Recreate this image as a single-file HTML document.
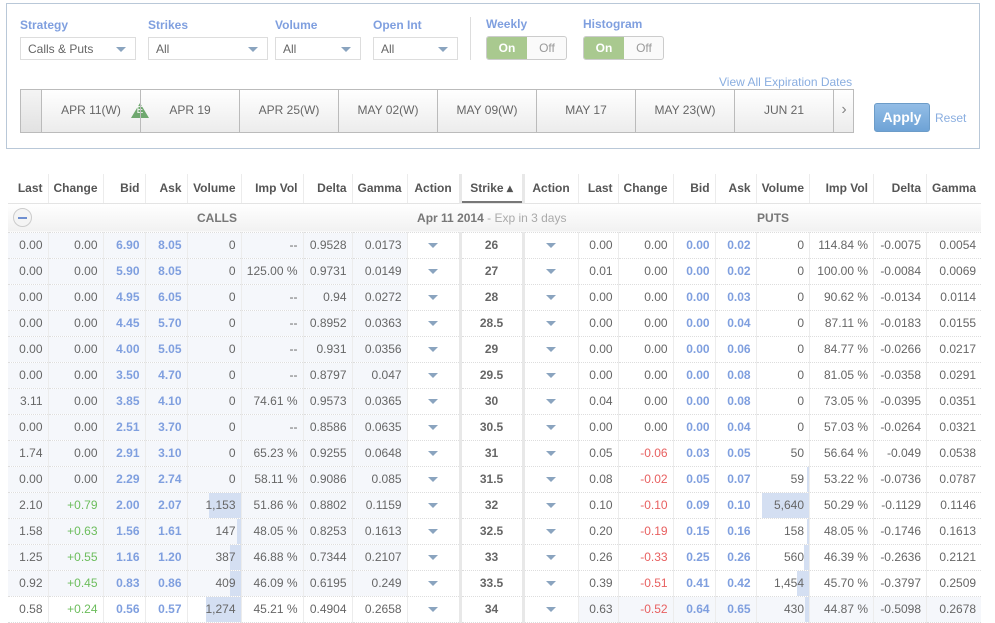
<!DOCTYPE html><html><head><style>
*{box-sizing:border-box;margin:0;padding:0}
body{width:995px;height:623px;overflow:hidden;background:#fff;font-family:"Liberation Sans",Arial,sans-serif;font-size:12px;color:#666;position:relative}
.panel{position:absolute;left:6px;top:3px;width:974px;height:146px;border:1px solid #b9c8d8}
.lbl{position:absolute;top:14px;color:#7f9fdf;font-weight:bold;font-size:12px}
.sel{position:absolute;top:33px;height:23px;border:1px solid #ddd;padding:4px 7px;color:#666}
.sel:after{content:"";position:absolute;right:9px;top:9px;border-left:5px solid transparent;border-right:5px solid transparent;border-top:5px solid #8aa4bf}
.tog{position:absolute;top:32px;width:81px;height:24px;border:1px solid #ccc;border-radius:3px;overflow:hidden;background:#fafafa}
.tog span{position:absolute;top:0;height:22px;line-height:22px;width:40px;text-align:center}
.tog .on{left:0;background:#a9c98f;color:#fff;font-weight:bold}
.tog .off{left:40px;color:#999}
.tabs{position:absolute;left:13px;top:85px;height:44px;width:834px;border:1px solid #bbb;background:linear-gradient(#fff,#ececec)}
.tab{position:absolute;top:0;height:42px;line-height:40px;width:99px;border-left:1px solid #bbb;text-align:center;color:#666;font-size:12px}
table{position:absolute;left:8px;top:174px;border-collapse:collapse;table-layout:fixed}
td,th{height:26px;padding:0 5px;text-align:right;border-left:1px solid #ececec;border-bottom:1px dotted #ddd;white-space:nowrap;position:relative}
th{height:29px;font-weight:bold;color:#555;border-bottom:1px solid #e4e4e4}
tr.g td{height:29px;background:linear-gradient(#fff,#f1f1f1);font-weight:bold;color:#777;border-left:none}
.b{color:#7f9fdf;font-weight:bold}.gr{color:#6cbd5c}.rd{color:#e86060}
.s{background:#f5f7fb}
td.k{text-align:center;font-weight:bold;color:#666;border-left:3px solid #e8e8e8;border-right:3px solid #e8e8e8}
th.k{border-left:3px solid #e8e8e8;border-right:3px solid #e8e8e8;text-align:center}
td.a{text-align:center}
.ar{display:inline-block;border-left:5px solid transparent;border-right:5px solid transparent;border-top:5px solid #8aa4bf;vertical-align:middle}
.h{position:absolute;right:0;top:0;bottom:0;background:#d4dff2;z-index:0}
.v{position:relative;z-index:1}
</style></head><body>
<div class="panel">
<div class="lbl" style="left:13px">Strategy</div>
<div class="sel" style="left:13px;width:116px">Calls &amp; Puts</div>
<div class="lbl" style="left:141px">Strikes</div>
<div class="sel" style="left:141px;width:120px">All</div>
<div class="lbl" style="left:268px">Volume</div>
<div class="sel" style="left:268px;width:86px">All</div>
<div class="lbl" style="left:366px">Open Int</div>
<div class="sel" style="left:366px;width:85px">All</div>
<div style="position:absolute;left:463px;top:13px;width:1px;height:43px;background:#ddd"></div>
<div class="lbl" style="left:479px;top:13px">Weekly</div>
<div class="tog" style="left:479px"><span class="on">On</span><span class="off">Off</span></div>
<div class="lbl" style="left:576px;top:13px">Histogram</div>
<div class="tog" style="left:576px"><span class="on">On</span><span class="off">Off</span></div>
<div style="position:absolute;left:712px;top:71px;color:#8aaee0">View All Expiration Dates</div>
<div class="tabs">
<div style="position:absolute;left:0;top:0;width:20px;height:42px;background:linear-gradient(#f4f4f4,#e2e2e2)"></div>
<div class="tab" style="left:20px">APR 11(W)</div>
<div style="position:absolute;left:110px;top:13px;width:0;height:0;border-left:9px solid transparent;border-right:9px solid transparent;border-bottom:15px solid #6fa86f"></div>
<div style="position:absolute;left:110px;top:15px;width:18px;text-align:center;color:#fff;font-size:10px">E</div>
<div class="tab" style="left:119px">APR 19</div>
<div class="tab" style="left:218px">APR 25(W)</div>
<div class="tab" style="left:317px">MAY 02(W)</div>
<div class="tab" style="left:416px">MAY 09(W)</div>
<div class="tab" style="left:515px">MAY 17</div>
<div class="tab" style="left:614px">MAY 23(W)</div>
<div class="tab" style="left:713px">JUN 21</div>
<div class="tab" style="left:812px;width:21px;color:#888;font-size:16px">&#8250;</div>
</div>
<div style="position:absolute;left:867px;top:99px;width:56px;height:29px;border:1px solid #6c9cc8;border-radius:3px;background:linear-gradient(#93bde6,#6ea3d6);color:#fff;font-weight:bold;font-size:14px;text-align:center;line-height:27px">Apply</div>
<div style="position:absolute;left:928px;top:107px;color:#8aaee0">Reset</div>
</div>
<table>
<colgroup><col style="width:40px"><col style="width:54px"><col style="width:42px"><col style="width:42px"><col style="width:54px"><col style="width:62px"><col style="width:49px"><col style="width:55px"><col style="width:53px"><col style="width:63px"><col style="width:55px"><col style="width:40px"><col style="width:55px"><col style="width:42px"><col style="width:41px"><col style="width:52px"><col style="width:64px"><col style="width:53px"><col style="width:54px"></colgroup>
<tr><th style="border-left:none">Last</th><th>Change</th><th>Bid</th><th>Ask</th><th>Volume</th><th>Imp Vol</th><th>Delta</th><th>Gamma</th><th style="text-align:center">Action</th><th class="k" style="box-shadow:inset 0 -2px #777">Strike &#9652;</th><th style="text-align:center">Action</th><th>Last</th><th>Change</th><th>Bid</th><th>Ask</th><th>Volume</th><th>Imp Vol</th><th>Delta</th><th>Gamma</th></tr>
<tr class="g"><td style="text-align:left"><span style="display:inline-block;width:19px;height:19px;border:1px solid #ccc;border-radius:50%;background:#f4f4f4;vertical-align:middle;position:relative"><span style="position:absolute;left:4px;top:8px;width:9px;height:2px;background:#6f8fd0"></span></span></td><td></td><td></td><td></td><td colspan="4" style="text-align:left;padding-left:10px">CALLS</td><td colspan="3" style="text-align:left;padding-left:10px;border-left:none">Apr 11 2014 <span style="color:#aaa;font-weight:normal">- Exp in 3 days</span></td><td colspan="8" style="text-align:left;padding-left:179px">PUTS</td></tr>
<tr><td class="s" style="border-left:none">0.00</td><td class="s">0.00</td><td class="s b">6.90</td><td class="s b">8.05</td><td class="s">0</td><td class="s">--</td><td class="s">0.9528</td><td class="s">0.0173</td><td class="a"><i class="ar"></i></td><td class="k">26</td><td class="a"><i class="ar"></i></td><td>0.00</td><td>0.00</td><td class="b">0.00</td><td class="b">0.02</td><td>0</td><td>114.84 %</td><td>-0.0075</td><td>0.0054</td></tr>
<tr><td class="s" style="border-left:none">0.00</td><td class="s">0.00</td><td class="s b">5.90</td><td class="s b">8.05</td><td class="s">0</td><td class="s">125.00 %</td><td class="s">0.9731</td><td class="s">0.0149</td><td class="a"><i class="ar"></i></td><td class="k">27</td><td class="a"><i class="ar"></i></td><td>0.01</td><td>0.00</td><td class="b">0.00</td><td class="b">0.02</td><td>0</td><td>100.00 %</td><td>-0.0084</td><td>0.0069</td></tr>
<tr><td class="s" style="border-left:none">0.00</td><td class="s">0.00</td><td class="s b">4.95</td><td class="s b">6.05</td><td class="s">0</td><td class="s">--</td><td class="s">0.94</td><td class="s">0.0272</td><td class="a"><i class="ar"></i></td><td class="k">28</td><td class="a"><i class="ar"></i></td><td>0.00</td><td>0.00</td><td class="b">0.00</td><td class="b">0.03</td><td>0</td><td>90.62 %</td><td>-0.0134</td><td>0.0114</td></tr>
<tr><td class="s" style="border-left:none">0.00</td><td class="s">0.00</td><td class="s b">4.45</td><td class="s b">5.70</td><td class="s">0</td><td class="s">--</td><td class="s">0.8952</td><td class="s">0.0363</td><td class="a"><i class="ar"></i></td><td class="k">28.5</td><td class="a"><i class="ar"></i></td><td>0.00</td><td>0.00</td><td class="b">0.00</td><td class="b">0.04</td><td>0</td><td>87.11 %</td><td>-0.0183</td><td>0.0155</td></tr>
<tr><td class="s" style="border-left:none">0.00</td><td class="s">0.00</td><td class="s b">4.00</td><td class="s b">5.05</td><td class="s">0</td><td class="s">--</td><td class="s">0.931</td><td class="s">0.0356</td><td class="a"><i class="ar"></i></td><td class="k">29</td><td class="a"><i class="ar"></i></td><td>0.00</td><td>0.00</td><td class="b">0.00</td><td class="b">0.06</td><td>0</td><td>84.77 %</td><td>-0.0266</td><td>0.0217</td></tr>
<tr><td class="s" style="border-left:none">0.00</td><td class="s">0.00</td><td class="s b">3.50</td><td class="s b">4.70</td><td class="s">0</td><td class="s">--</td><td class="s">0.8797</td><td class="s">0.047</td><td class="a"><i class="ar"></i></td><td class="k">29.5</td><td class="a"><i class="ar"></i></td><td>0.00</td><td>0.00</td><td class="b">0.00</td><td class="b">0.08</td><td>0</td><td>81.05 %</td><td>-0.0358</td><td>0.0291</td></tr>
<tr><td class="s" style="border-left:none">3.11</td><td class="s">0.00</td><td class="s b">3.85</td><td class="s b">4.10</td><td class="s">0</td><td class="s">74.61 %</td><td class="s">0.9573</td><td class="s">0.0365</td><td class="a"><i class="ar"></i></td><td class="k">30</td><td class="a"><i class="ar"></i></td><td>0.04</td><td>0.00</td><td class="b">0.00</td><td class="b">0.08</td><td>0</td><td>73.05 %</td><td>-0.0395</td><td>0.0351</td></tr>
<tr><td class="s" style="border-left:none">0.00</td><td class="s">0.00</td><td class="s b">2.51</td><td class="s b">3.70</td><td class="s">0</td><td class="s">--</td><td class="s">0.8586</td><td class="s">0.0635</td><td class="a"><i class="ar"></i></td><td class="k">30.5</td><td class="a"><i class="ar"></i></td><td>0.00</td><td>0.00</td><td class="b">0.00</td><td class="b">0.04</td><td>0</td><td>57.03 %</td><td>-0.0264</td><td>0.0321</td></tr>
<tr><td class="s" style="border-left:none">1.74</td><td class="s">0.00</td><td class="s b">2.91</td><td class="s b">3.10</td><td class="s">0</td><td class="s">65.23 %</td><td class="s">0.9255</td><td class="s">0.0648</td><td class="a"><i class="ar"></i></td><td class="k">31</td><td class="a"><i class="ar"></i></td><td>0.05</td><td class="rd">-0.06</td><td class="b">0.03</td><td class="b">0.05</td><td>50</td><td>56.64 %</td><td>-0.049</td><td>0.0538</td></tr>
<tr><td class="s" style="border-left:none">0.00</td><td class="s">0.00</td><td class="s b">2.29</td><td class="s b">2.74</td><td class="s">0</td><td class="s">58.11 %</td><td class="s">0.9086</td><td class="s">0.085</td><td class="a"><i class="ar"></i></td><td class="k">31.5</td><td class="a"><i class="ar"></i></td><td>0.08</td><td class="rd">-0.02</td><td class="b">0.05</td><td class="b">0.07</td><td><span class="h" style="width:2px"></span><span class="v">59</span></td><td>53.22 %</td><td>-0.0736</td><td>0.0787</td></tr>
<tr><td class="s" style="border-left:none">2.10</td><td class="s gr">+0.79</td><td class="s b">2.00</td><td class="s b">2.07</td><td class="s"><span class="h" style="width:32px"></span><span class="v">1,153</span></td><td class="s">51.86 %</td><td class="s">0.8802</td><td class="s">0.1159</td><td class="a"><i class="ar"></i></td><td class="k">32</td><td class="a"><i class="ar"></i></td><td>0.10</td><td class="rd">-0.10</td><td class="b">0.09</td><td class="b">0.10</td><td><span class="h" style="width:47px"></span><span class="v">5,640</span></td><td>50.29 %</td><td>-0.1129</td><td>0.1146</td></tr>
<tr><td class="s" style="border-left:none">1.58</td><td class="s gr">+0.63</td><td class="s b">1.56</td><td class="s b">1.61</td><td class="s"><span class="h" style="width:4px"></span><span class="v">147</span></td><td class="s">48.05 %</td><td class="s">0.8253</td><td class="s">0.1613</td><td class="a"><i class="ar"></i></td><td class="k">32.5</td><td class="a"><i class="ar"></i></td><td>0.20</td><td class="rd">-0.19</td><td class="b">0.15</td><td class="b">0.16</td><td><span class="h" style="width:2px"></span><span class="v">158</span></td><td>48.05 %</td><td>-0.1746</td><td>0.1613</td></tr>
<tr><td class="s" style="border-left:none">1.25</td><td class="s gr">+0.55</td><td class="s b">1.16</td><td class="s b">1.20</td><td class="s"><span class="h" style="width:11px"></span><span class="v">387</span></td><td class="s">46.88 %</td><td class="s">0.7344</td><td class="s">0.2107</td><td class="a"><i class="ar"></i></td><td class="k">33</td><td class="a"><i class="ar"></i></td><td>0.26</td><td class="rd">-0.33</td><td class="b">0.25</td><td class="b">0.26</td><td><span class="h" style="width:5px"></span><span class="v">560</span></td><td>46.39 %</td><td>-0.2636</td><td>0.2121</td></tr>
<tr><td class="s" style="border-left:none">0.92</td><td class="s gr">+0.45</td><td class="s b">0.83</td><td class="s b">0.86</td><td class="s"><span class="h" style="width:11px"></span><span class="v">409</span></td><td class="s">46.09 %</td><td class="s">0.6195</td><td class="s">0.249</td><td class="a"><i class="ar"></i></td><td class="k">33.5</td><td class="a"><i class="ar"></i></td><td>0.39</td><td class="rd">-0.51</td><td class="b">0.41</td><td class="b">0.42</td><td><span class="h" style="width:12px"></span><span class="v">1,454</span></td><td>45.70 %</td><td>-0.3797</td><td>0.2509</td></tr>
<tr><td style="border-left:none">0.58</td><td class="gr">+0.24</td><td class="b">0.56</td><td class="b">0.57</td><td><span class="h" style="width:35px"></span><span class="v">1,274</span></td><td>45.21 %</td><td>0.4904</td><td>0.2658</td><td class="a"><i class="ar"></i></td><td class="k">34</td><td class="a"><i class="ar"></i></td><td class="s">0.63</td><td class="s rd">-0.52</td><td class="s b">0.64</td><td class="s b">0.65</td><td class="s"><span class="h" style="width:4px"></span><span class="v">430</span></td><td class="s">44.87 %</td><td class="s">-0.5098</td><td class="s">0.2678</td></tr>
</table>
</body></html>
